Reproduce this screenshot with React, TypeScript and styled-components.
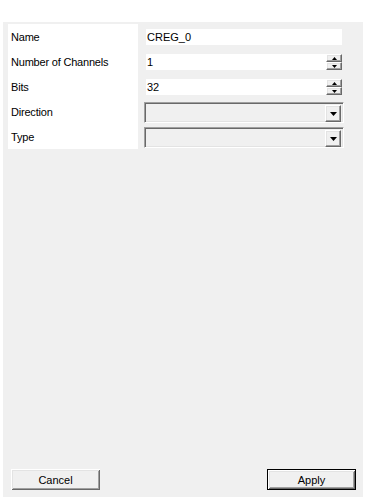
import React from "react";
import styled, { createGlobalStyle, css } from "styled-components";

const GlobalStyle = createGlobalStyle`
  html, body {
    margin: 0;
    padding: 0;
    background: #ffffff;
  }
  body {
    font-family: "Liberation Sans", Arial, sans-serif;
    font-size: 11px;
    color: #000;
  }
`;

const Page = styled.div`
  width: 368px;
  height: 501px;
  box-sizing: border-box;
  padding: 22px 5px 4px 3px;
  background: #ffffff;
`;

const Panel = styled.div`
  height: 100%;
  background: #f0f0f0;
  display: flex;
  flex-direction: column;
`;

const Form = styled.div`
  display: flex;
  padding: 2px 0 0 5px;
  gap: 6px;
`;

const LabelColumn = styled.div`
  width: 130px;
  height: 125px;
  box-sizing: border-box;
  padding-top: 1px;
  background: #ffffff;
  display: flex;
  flex-direction: column;
  overflow: hidden;
`;

const Label = styled.div`
  height: 25px;
  flex-shrink: 0;
  line-height: 25px;
  padding-left: 3px;
  letter-spacing: -0.2px;
  white-space: nowrap;
`;

const FieldColumn = styled.div`
  width: 200px;
  display: flex;
  flex-direction: column;
`;

const FieldRow = styled.div<{ $top: number }>`
  height: 25px;
  box-sizing: border-box;
  padding-top: ${(p) => p.$top}px;
  display: flex;
  align-items: flex-start;
`;

const TextBox = styled.div`
  margin-left: 2px;
  width: 196px;
  height: 16px;
  background: #ffffff;
  display: flex;
`;

const TextValue = styled.div`
  flex: 1;
  line-height: 16px;
  padding-left: 1px;
  white-space: nowrap;
`;

const SpinBox = styled.div`
  width: 16px;
  height: 16px;
  display: flex;
  flex-direction: column;
`;

const raised = css`
  background: #f0f0f0;
  border: 1px solid;
  border-color: #ffffff #696969 #696969 #ffffff;
  box-shadow: inset -1px -1px #a0a0a0, inset 1px 1px #e3e3e3;
  box-sizing: border-box;
  display: flex;
  align-items: center;
  justify-content: center;
`;

const SpinButton = styled.div`
  ${raised};
  height: 8px;
  width: 16px;
`;

const Combo = styled.div`
  width: 200px;
  height: 21px;
  box-sizing: border-box;
  border: 1px solid;
  border-color: #a0a0a0 #ffffff #ffffff #a0a0a0;
  box-shadow: inset 1px 1px #696969, inset -1px -1px #e3e3e3;
  background: #f0f0f0;
  display: flex;
  justify-content: flex-end;
  padding: 2px 2px 1px 2px;
`;

const DropButton = styled.div`
  ${raised};
  width: 16px;
  height: 17px;
`;

const Spacer = styled.div`
  flex: 1;
`;

const Footer = styled.div`
  display: flex;
  justify-content: space-between;
  padding: 0 7px 7px 8px;
`;

const PushButton = styled.button<{ $default?: boolean }>`
  width: 89px;
  height: 21px;
  box-sizing: border-box;
  margin: 0;
  padding: 0;
  font-family: "Liberation Sans", Arial, sans-serif;
  font-size: 11px;
  color: #000;
  background: #f0f0f0;
  border: ${(p) => (p.$default ? "1px solid #000" : "none")};
  box-shadow: inset 1px 1px #ffffff, inset -1px -1px #696969,
    inset 2px 2px #e3e3e3, inset -2px -2px #a0a0a0;
`;

const UpArrow = () => (
  <svg width="5" height="3" viewBox="0 0 5 3">
    <polygon points="2.5,0 5,3 0,3" fill="#000" />
  </svg>
);

const DownArrow = ({ w = 5, h = 3 }: { w?: number; h?: number }) => (
  <svg width={w} height={h} viewBox={`0 0 ${w} ${h}`}>
    <polygon points={`0,0 ${w},0 ${w / 2},${h}`} fill="#000" />
  </svg>
);

const Spinner = () => (
  <SpinBox>
    <SpinButton>
      <UpArrow />
    </SpinButton>
    <SpinButton>
      <DownArrow />
    </SpinButton>
  </SpinBox>
);

export default function App() {
  return (
    <>
      <GlobalStyle />
      <Page>
        <Panel>
          <Form>
            <LabelColumn>
              <Label>Name</Label>
              <Label>Number of Channels</Label>
              <Label>Bits</Label>
              <Label>Direction</Label>
              <Label>Type</Label>
            </LabelColumn>
            <FieldColumn>
              <FieldRow $top={5}>
                <TextBox>
                  <TextValue>CREG_0</TextValue>
                </TextBox>
              </FieldRow>
              <FieldRow $top={5}>
                <TextBox>
                  <TextValue>1</TextValue>
                  <Spinner />
                </TextBox>
              </FieldRow>
              <FieldRow $top={5}>
                <TextBox>
                  <TextValue>32</TextValue>
                  <Spinner />
                </TextBox>
              </FieldRow>
              <FieldRow $top={3}>
                <Combo>
                  <DropButton>
                    <DownArrow w={7} h={4} />
                  </DropButton>
                </Combo>
              </FieldRow>
              <FieldRow $top={3}>
                <Combo>
                  <DropButton>
                    <DownArrow w={7} h={4} />
                  </DropButton>
                </Combo>
              </FieldRow>
            </FieldColumn>
          </Form>
          <Spacer />
          <Footer>
            <PushButton>Cancel</PushButton>
            <PushButton $default>Apply</PushButton>
          </Footer>
        </Panel>
      </Page>
    </>
  );
}
